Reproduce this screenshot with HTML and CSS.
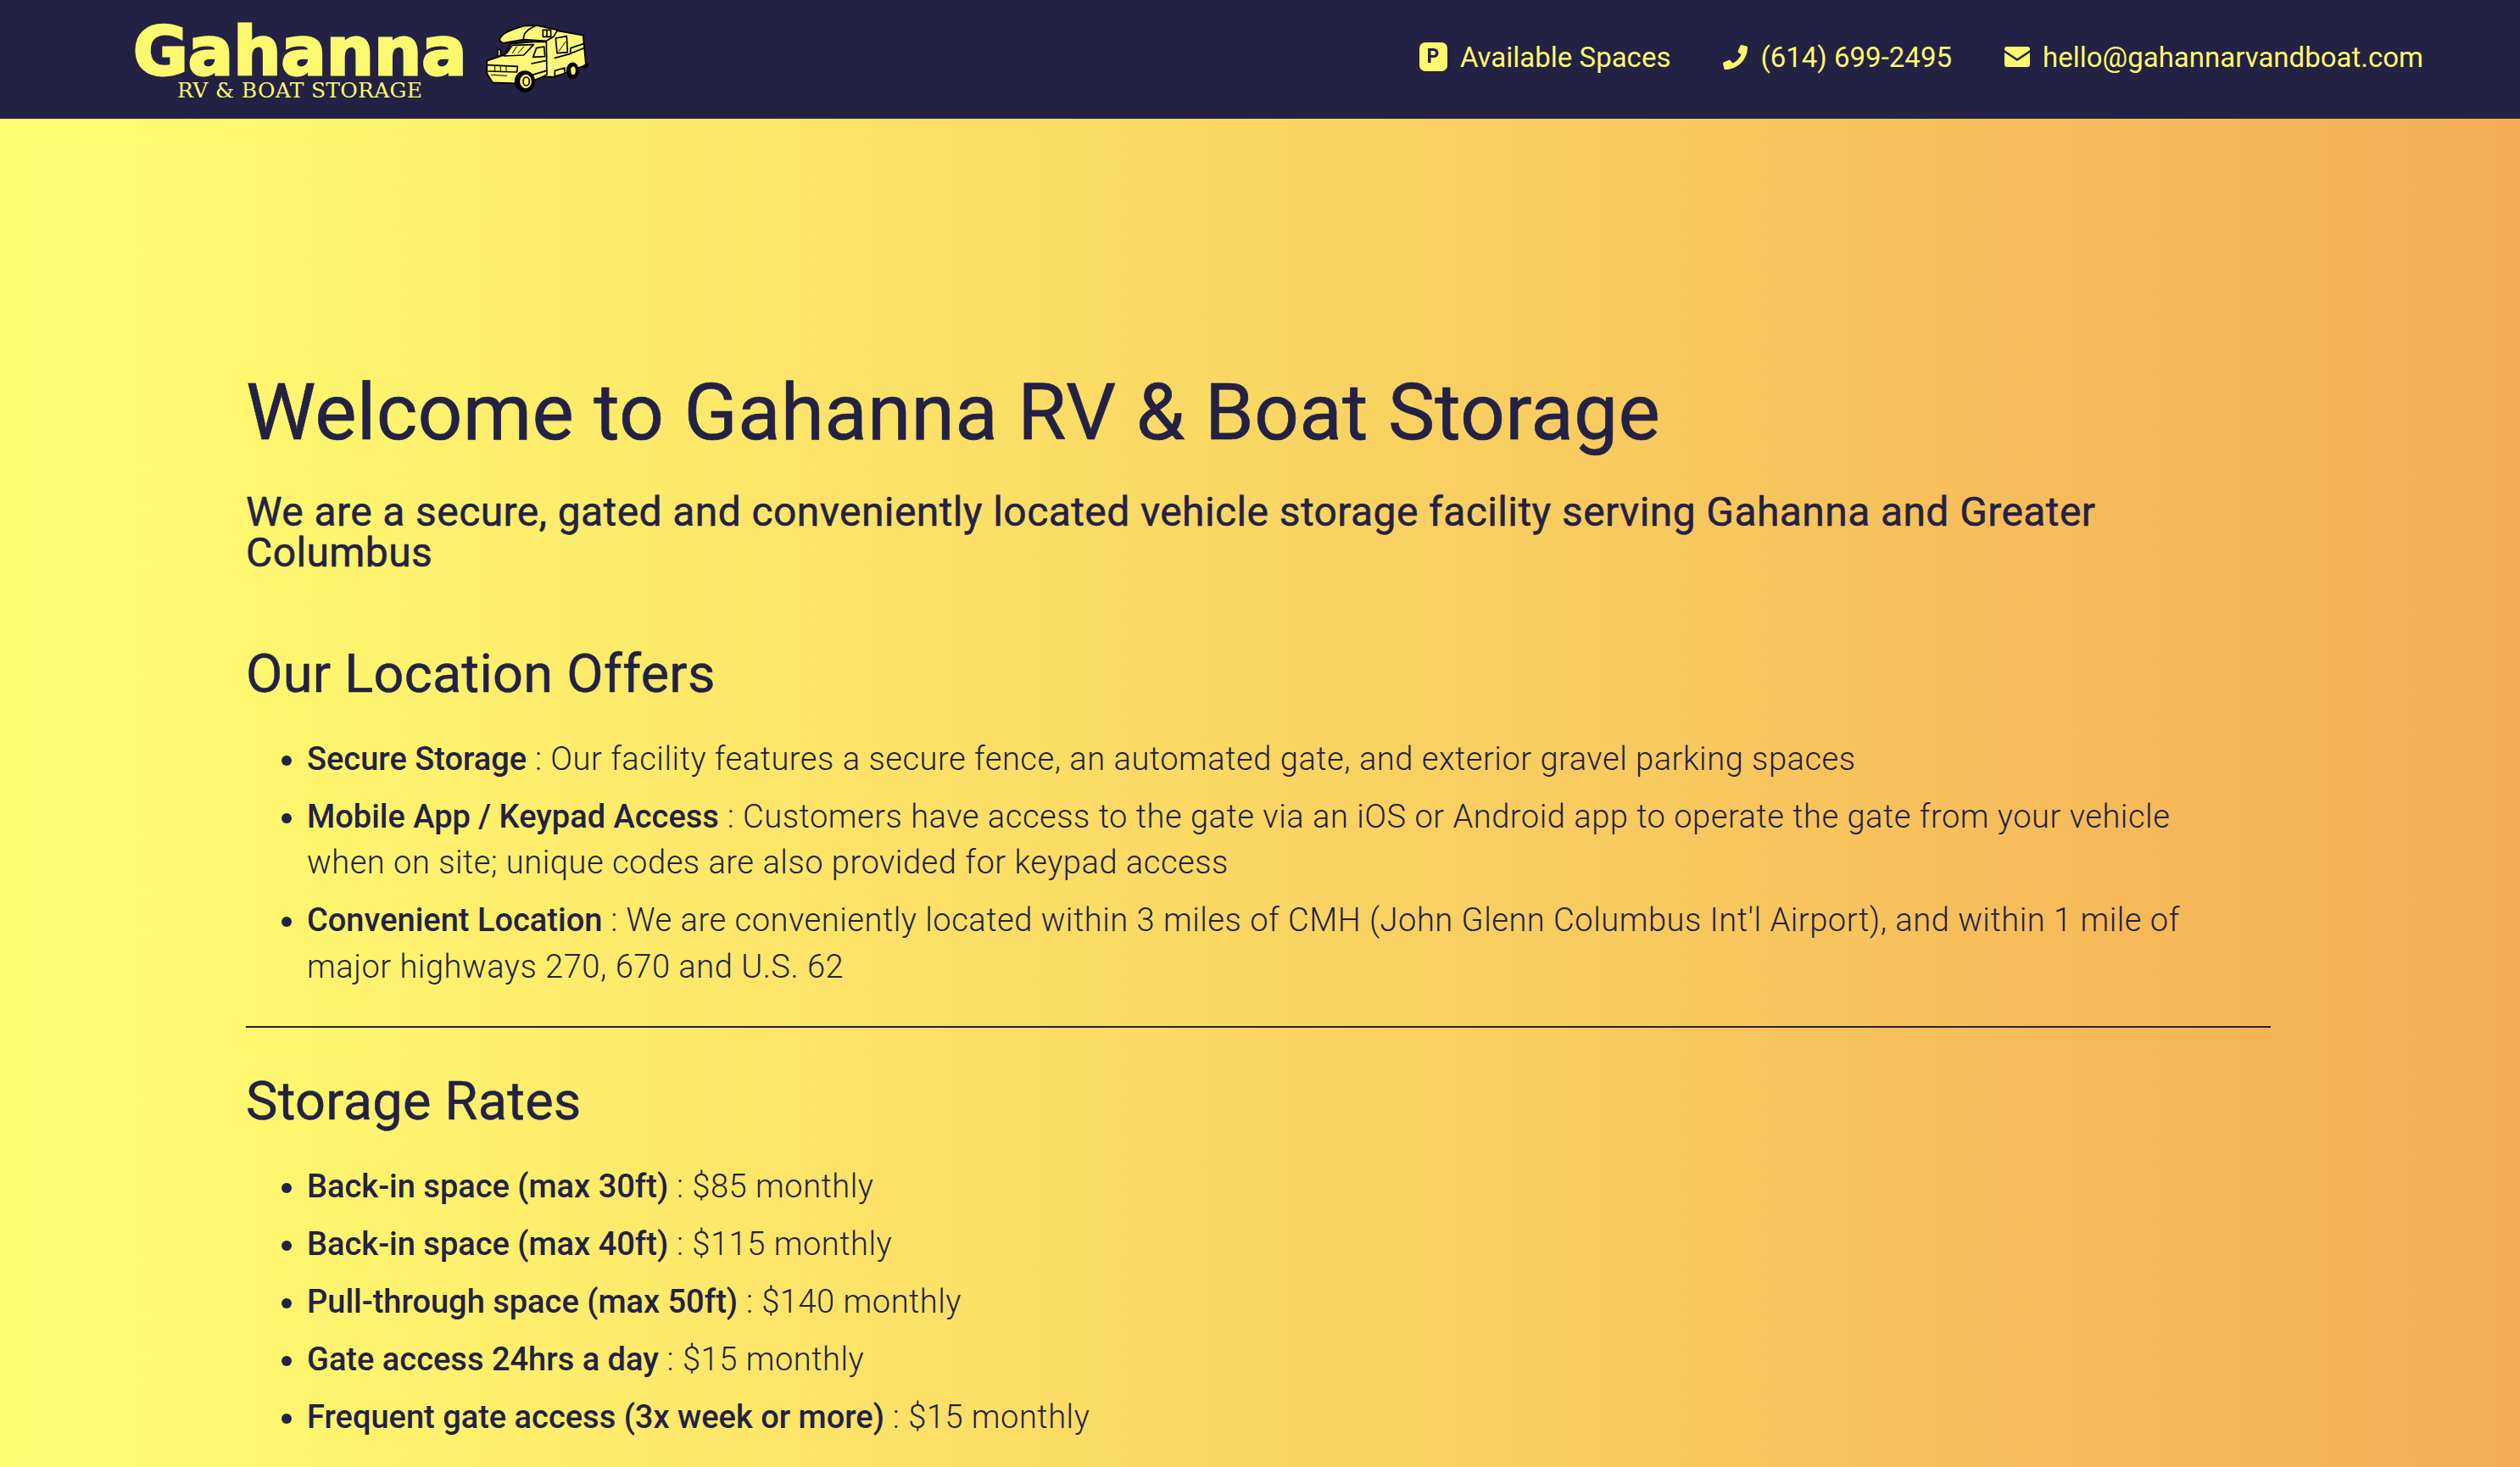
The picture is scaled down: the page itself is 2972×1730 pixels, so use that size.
FILE: index.html
```html
<!DOCTYPE html>
<html lang="en">
<head>
<meta charset="utf-8">
<title>Gahanna RV &amp; Boat Storage</title>
<link rel="stylesheet" href="styles.css">
</head>
<body>
<header class="topbar">
  <a class="brand" href="#">
    <span class="brand-text">
      <span class="brand-name">Gahanna</span>
      <span class="brand-sub">RV &amp; BOAT STORAGE</span>
    </span>
    <svg class="truck" viewBox="0 0 450 300" aria-hidden="true">
      <g fill="#fdf77a" stroke="#000" stroke-width="5" stroke-linejoin="round" stroke-linecap="round">
        <path d="M240 40 L380 65 L390 170 L350 185 L280 212 L240 212 Z"/>
        <path d="M85 78 Q95 52 170 32 L215 30 L290 46 L275 70 L250 85 L170 80 L100 92 Q85 90 85 78 Z"/>
        <path d="M170 80 Q165 50 215 30"/>
        <path d="M78 120 Q80 112 88 116 L88 138 L78 138 Z"/>
        <path d="M100 135 L125 95 L205 88 L250 88 L252 205 L205 225 L150 235 L60 232 L40 200 L40 155 Z"/>
        <path d="M100 138 L130 100 L205 98 L170 135 Z"/>
        <path d="M203 142 L215 110 L242 105 L245 140 Z"/>
        <path d="M238 46 H266 V70 H238 Z M252 46 V70"/>
        <path d="M283 75 L322 68 L325 125 L288 128 Z"/>
        <path d="M280 145 L335 130 L382 110 M335 130 L336 110 L382 95" fill="none"/>
        <path d="M198 165 L247 155 M200 205 L250 190 M40 170 L148 175 L146 195 L45 192" fill="none"/>
        <path d="M68 172 V192 M88 174 V192 M108 175 V194 M55 205 L110 208" fill="none" stroke-width="3"/>
        <path d="M280 190 L315 180 V200 L280 210 Z"/>
        <path d="M112 128 L125 108 M130 128 L145 105 M150 128 L170 105 M295 120 L318 88" fill="none" stroke-width="3"/>
        <ellipse cx="343" cy="190" rx="20" ry="27" fill="#000"/>
        <ellipse cx="345" cy="190" rx="11" ry="17"/>
        <ellipse cx="174" cy="228" rx="34" ry="36" fill="#000"/>
        <ellipse cx="177" cy="228" rx="23" ry="27"/>
        <ellipse cx="179" cy="228" rx="11" ry="15"/>
        <path d="M385 170 L396 166 L396 176 L385 180 Z" fill="#000"/>
      </g>
    </svg>
  </a>
  <nav class="contact">
    <a class="contact-item" href="#">
      <svg class="icon icon-p" viewBox="0 0 33 34" aria-hidden="true"><rect width="33" height="34" rx="7" fill="#fdf96f"/><path fill="#232144" fill-rule="evenodd" d="M10 7h7a5.500 5.500 0 0 1 0 11h-3.500v6H10z M13.500 10v5h3a2.500 2.500 0 0 0 0-5z"/></svg>
      <span>Available Spaces</span>
    </a>
    <a class="contact-item" href="#">
      <svg class="icon icon-phone" viewBox="0 0 512 512" aria-hidden="true"><path fill="#fdf96f" d="M493.4 24.6l-104-24c-11.3-2.6-22.9 3.3-27.5 13.9l-48 112c-4.2 9.8-1.4 21.3 6.9 28l60.6 49.6c-36 76.7-98.9 140.500-177.200 177.200l-49.600-60.600c-6.800-8.300-18.200-11.100-28-6.900l-112 48C3.900 366.500-2 378.100.6 389.400l24 104C27.100 504.200 36.700 512 48 512c256.100 0 464-207.500 464-464 0-11.200-7.700-20.900-18.600-23.400z"/></svg>
      <span>(614) 699-2495</span>
    </a>
    <a class="contact-item" href="#">
      <svg class="icon icon-mail" viewBox="0 0 30 24" aria-hidden="true"><path fill="#fdf96f" d="M3 0h24a3 3 0 0 1 3 3v1L15 14 0 4V3a3 3 0 0 1 3-3z M0 7l15 10L30 7v14a3 3 0 0 1-3 3H3a3 3 0 0 1-3-3z"/></svg>
      <span>hello@gahannarvandboat.com</span>
    </a>
  </nav>
</header>
<main class="content">
  <h1 class="title">Welcome to Gahanna RV &amp; Boat Storage</h1>
  <h3 class="lead">We are a secure, gated and conveniently located vehicle storage facility serving Gahanna and Greater Columbus</h3>
  <h2 class="section-title">Our Location Offers</h2>
  <ul class="list">
    <li><strong>Secure Storage</strong> : Our facility features a secure fence, an automated gate, and exterior gravel parking spaces</li>
    <li><strong>Mobile App / Keypad Access</strong> : Customers have access to the gate via an iOS or Android app to operate the gate from your vehicle when on site; unique codes are also provided for keypad access</li>
    <li><strong>Convenient Location</strong> : We are conveniently located within 3 miles of CMH (John Glenn Columbus Int'l Airport), and within 1 mile of major highways 270, 670 and U.S. 62</li>
  </ul>
  <hr class="rule">
  <h2 class="section-title">Storage Rates</h2>
  <ul class="list">
    <li><strong>Back-in space (max 30ft)</strong> : $85 monthly</li>
    <li><strong>Back-in space (max 40ft)</strong> : $115 monthly</li>
    <li><strong>Pull-through space (max 50ft)</strong> : $140 monthly</li>
    <li><strong>Gate access 24hrs a day</strong> : $15 monthly</li>
    <li><strong>Frequent gate access (3x week or more)</strong> : $15 monthly</li>
  </ul>
</main>
</body>
</html>
```
FILE: styles.css
```css
html, body { margin: 0; padding: 0; height: 100%; overflow: hidden; }
body {
  background: linear-gradient(90deg, #ffff72 0%, #f4ad54 100%);
  color: #232144;
  font-family: "Roboto", "Noto Sans", sans-serif;
  font-size: 38px;
}
a { color: inherit; text-decoration: none; }
.topbar {
  height: 140px;
  box-sizing: border-box;
  background: #232144;
  color: #fdf96f;
  display: flex;
  align-items: center;
  justify-content: space-between;
  padding: 0 114px 0 157px;
}
.brand { display: flex; align-items: center; gap: 10px; }
.brand-text { display: flex; flex-direction: column; align-items: center; padding-top: 10px; }
.brand-name {
  font-family: "DejaVu Sans", sans-serif;
  font-weight: 700;
  font-size: 79px;
  line-height: 64px;
  -webkit-text-stroke: 3px #fdf96f;
}
.brand-sub {
  font-family: "DejaVu Serif", serif;
  font-size: 25px;
  line-height: 28px;
  letter-spacing: 0.3px;
}
.truck { width: 150px; height: 100px; }
.contact { display: flex; gap: 62px; font-size: 33px; padding-bottom: 6px; }
.contact-item { display: flex; align-items: center; gap: 15px; }
.icon { display: block; flex: none; }
.icon-p { width: 33px; height: 34px; }
.icon-phone { width: 29px; height: 29px; }
.icon-mail { width: 30px; height: 24px; }
.content { padding: 292px 294px 0 290px; }
.title { margin: 0; font-size: 93px; font-weight: 400; line-height: 110px; letter-spacing: 0.2px; -webkit-text-stroke: 0.6px #232144; }
.lead { margin: 38px 0 83px; font-size: 48px; font-weight: 400; letter-spacing: 0.4px; line-height: 48px; -webkit-text-stroke: 0.5px #232144; }
.section-title { margin: 0; font-size: 63px; font-weight: 400; letter-spacing: 0.3px; line-height: 72px; -webkit-text-stroke: 0.5px #232144; }
.list { margin: 37px 0 0; padding: 0 62px 0 72px; font-size: 38px; font-weight: 300; letter-spacing: 0.55px; line-height: 54.4px; }
.list li { margin-bottom: 13.6px; }
.list strong { font-weight: 500; letter-spacing: 0; }
.rule { margin: 43px 0 51px; border: 0; border-top: 2px solid #232144; }
```
